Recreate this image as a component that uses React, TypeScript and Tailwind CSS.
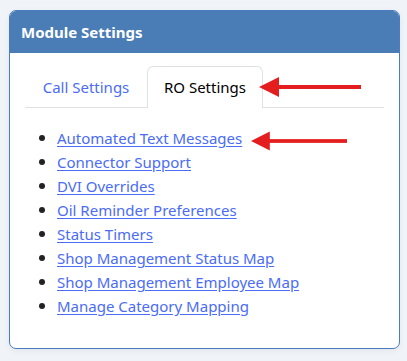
const links = [
  "Automated Text Messages",
  "Connector Support",
  "DVI Overrides",
  "Oil Reminder Preferences",
  "Status Timers",
  "Shop Management Status Map",
  "Shop Management Employee Map",
  "Manage Category Mapping",
]

function Arrow({ className }: { className: string }) {
  return (
    <svg className={className} viewBox="0 0 102 20" fill="none">
      <path d="M0 10 L20 0 L20 20 Z" fill="#e41e1e" />
      <rect x="18" y="8" width="84" height="4" fill="#e41e1e" />
    </svg>
  )
}

export default function App() {
  return (
    <div className="min-h-[361px] w-[407px] bg-[#f0f3f7] pt-[10px] pl-[9px] font-['Noto_Sans',sans-serif]">
      <div className="relative w-[391px] h-[339px] rounded-[7px] border border-[#4a7cc0] bg-white shadow-[0_2px_6px_rgba(0,0,0,0.06)] overflow-hidden">
        {/* Header */}
        <div className="h-[42px] bg-[#4a7cb6] flex items-center px-[11px]">
          <span className="text-white font-bold text-[15px]">Module Settings</span>
        </div>

        {/* Body */}
        <div className="pt-[14px] px-[15px]">
          <div className="flex items-end border-b border-[#dee2e6] h-[41px]">
            <div className="w-[122px] h-full flex items-center justify-center text-[15px] text-[#4a6cf7]">
              Call Settings
            </div>
            <div className="w-[116px] h-[42px] -mb-px flex items-center justify-center text-[15px] text-black bg-white border border-b-0 border-[#dee2e6] rounded-t-[6px]">
              RO Settings
            </div>
          </div>

          <ul className="mt-[18px]">
            {links.map((l) => (
              <li key={l} className="flex items-center h-[24px]">
                <span className="w-[6px] h-[6px] rounded-full bg-[#222] ml-[14px] mr-[12px]" />
                <a href="#" className="text-[15px] text-[#4a6cf7] underline underline-offset-2">
                  {l}
                </a>
              </li>
            ))}
          </ul>
        </div>

        <Arrow className="absolute left-[249px] top-[66px] w-[102px] h-[20px]" />
        <Arrow className="absolute left-[241px] top-[120px] w-[96px] h-[20px]" />
      </div>
    </div>
  )
}
